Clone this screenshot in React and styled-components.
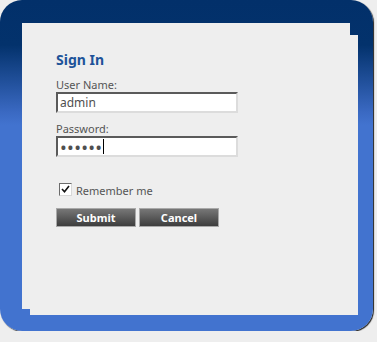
import styled, { createGlobalStyle } from 'styled-components';

export default function App() {
  return (
    <>
      <GlobalStyle />
      <Frame>
        <Panel>
          <Title>Sign In</Title>

          <Label htmlFor="user">User Name:</Label>
          <Field id="user" type="text" defaultValue="admin" readOnly />

          <Label htmlFor="pass" $gap>Password:</Label>
          <FieldWrap>
            <Field id="pass" type="password" defaultValue="secret" readOnly $mask />
            <Caret />
          </FieldWrap>

          <CheckRow>
            <CheckBox>
              <svg width="9" height="9" viewBox="0 0 9 9">
                <path d="M1 4 L3.5 6.8 L8 1" fill="none" stroke="#111" strokeWidth="1.6" />
              </svg>
            </CheckBox>
            <CheckLabel>Remember me</CheckLabel>
          </CheckRow>

          <Buttons>
            <Button type="button">Submit</Button>
            <Button type="button">Cancel</Button>
          </Buttons>
        </Panel>
      </Frame>
    </>
  );
}

const GlobalStyle = createGlobalStyle`
  body {
    margin: 0;
    background: #eeeeee;
    font-family: "Noto Sans", "Open Sans", sans-serif;
  }
`;

const Frame = styled.div`
  position: relative;
  isolation: isolate;
  box-sizing: border-box;
  width: 373px;
  height: 331px;
  padding: 23px 0 0 22px;
  border-radius: 22px;
  background: linear-gradient(
    to bottom,
    #02306a 0,
    #03326c 45px,
    #3a69c2 112px,
    #4273cf 125px,
    #4273cf 100%
  );
  box-shadow: 1px 1px 1px #222;
`;

const Panel = styled.div`
  position: relative;
  box-sizing: border-box;
  width: 328px;
  height: 286px;
  padding: 28px 34px;
  background: #eeeeee;

  &::before {
    content: '';
    position: absolute;
    left: 8px;
    top: 12px;
    right: -8px;
    bottom: -6px;
    background: #eeeeee;
    z-index: -1;
  }
`;

const Title = styled.h2`
  margin: 0 0 9px;
  font-size: 14px;
  line-height: 18px;
  font-weight: bold;
  color: #1d5399;
`;

const Label = styled.label`
  display: block;
  margin-top: ${({ $gap }) => ($gap ? '9px' : '0')};
  font-size: 11px;
  line-height: 14px;
  color: #555;
`;

const FieldWrap = styled.div`
  position: relative;
  width: 182px;
`;

const Field = styled.input`
  display: block;
  box-sizing: border-box;
  width: 182px;
  height: 21px;
  margin: 0;
  padding: 0 2px;
  border: 2px solid;
  border-color: #5a5a5a #dcdcdc #dcdcdc #5a5a5a;
  background: #fff;
  font-family: "Noto Sans", sans-serif;
  font-size: ${({ $mask }) => ($mask ? '18px' : '12px')};
  letter-spacing: ${({ $mask }) => ($mask ? '0.3px' : '0')};
  color: #4f4f4f;
  outline: none;
`;

const Caret = styled.span`
  position: absolute;
  left: 47px;
  top: 3px;
  width: 1px;
  height: 15px;
  background: #000;
`;

const CheckRow = styled.div`
  display: flex;
  align-items: center;
  gap: 4px;
  margin: 24px 0 0 3px;
`;

const CheckBox = styled.span`
  display: flex;
  align-items: center;
  justify-content: center;
  box-sizing: border-box;
  width: 13px;
  height: 13px;
  border: 1px solid;
  border-color: #6b6b6b #d8d8d8 #d8d8d8 #6b6b6b;
  background: #fff;
`;

const CheckLabel = styled.span`
  font-size: 11px;
  line-height: 14px;
  color: #555;
  padding-top: 3px;
`;

const Buttons = styled.div`
  display: flex;
  gap: 3px;
  margin-top: 10px;
`;

const Button = styled.button`
  box-sizing: border-box;
  width: 80px;
  height: 19px;
  padding: 0;
  border: 1px solid #a9a9a9;
  background: linear-gradient(to bottom, #777 0%, #5a5a5a 50%, #3d3d3d 100%);
  color: #fff;
  font-family: "Noto Sans", sans-serif;
  font-size: 11px;
  font-weight: bold;
  line-height: 16px;
`;
